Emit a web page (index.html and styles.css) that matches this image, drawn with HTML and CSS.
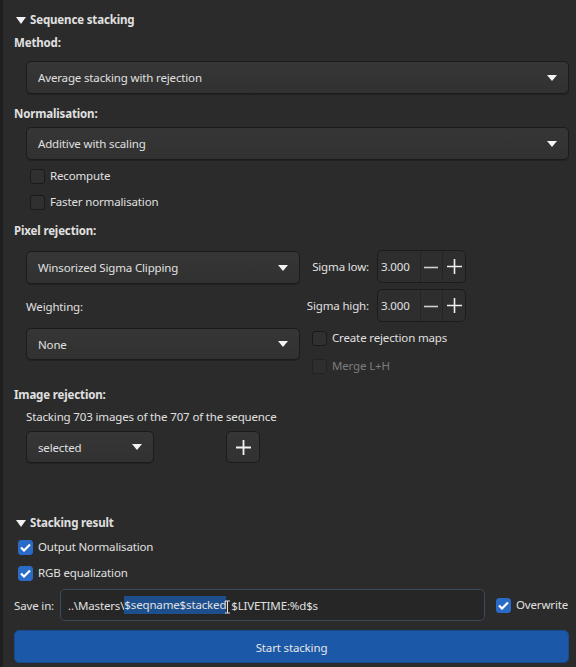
FILE: index.html
```html
<!DOCTYPE html>
<html lang="en">

<head>
    <meta charset="UTF-8">
    <title>Sequence stacking</title>
    <link rel="stylesheet" href="styles.css">
</head>

<body>
    <div class="page">
        <div class="section-head head-top"><span class="tri"></span>Sequence stacking</div>

        <div class="label bold lbl-method">Method:</div>
        <div class="combo combo-method"><span>Average stacking with rejection</span><span class="arrow"></span></div>

        <div class="label bold lbl-norm">Normalisation:</div>
        <div class="combo combo-norm"><span>Additive with scaling</span><span class="arrow"></span></div>

        <div class="check-row chk-recompute"><span class="box"></span>Recompute</div>
        <div class="check-row chk-faster"><span class="box"></span>Faster normalisation</div>

        <div class="label bold lbl-pixel">Pixel rejection:</div>

        <div class="reject-grid">
            <div class="reject-left">
                <div class="combo combo-algo"><span>Winsorized Sigma Clipping</span><span class="arrow"></span></div>
                <div class="label lbl-weight">Weighting:</div>
                <div class="combo combo-weight"><span>None</span><span class="arrow"></span></div>
            </div>
            <div class="reject-right">
                <div class="spin-row">
                    <span class="spin-label">Sigma low:</span>
                    <div class="spin">
                        <span class="spin-value">3.000</span>
                        <span class="spin-btn"><svg width="14" height="14" viewBox="0 0 14 14"><path d="M0 7.5h14" stroke="#cfcfcf" stroke-width="1.6"/></svg></span>
                        <span class="spin-btn"><svg width="15" height="15" viewBox="0 0 15 15"><path d="M0 7.5h15M7.5 0v15" stroke="#f0f0f0" stroke-width="1.6"/></svg></span>
                    </div>
                </div>
                <div class="spin-row spin-high">
                    <span class="spin-label">Sigma high:</span>
                    <div class="spin">
                        <span class="spin-value">3.000</span>
                        <span class="spin-btn"><svg width="14" height="14" viewBox="0 0 14 14"><path d="M0 7.5h14" stroke="#cfcfcf" stroke-width="1.6"/></svg></span>
                        <span class="spin-btn"><svg width="15" height="15" viewBox="0 0 15 15"><path d="M0 7.5h15M7.5 0v15" stroke="#f0f0f0" stroke-width="1.6"/></svg></span>
                    </div>
                </div>
                <div class="check-row chk-maps"><span class="box"></span>Create rejection maps</div>
                <div class="check-row chk-merge disabled"><span class="box"></span>Merge L+H</div>
            </div>
        </div>

        <div class="label bold lbl-image">Image rejection:</div>
        <div class="label lbl-count">Stacking 703 images of the 707 of the sequence</div>
        <div class="image-row">
            <div class="combo combo-select"><span>selected</span><span class="arrow"></span></div>
            <div class="plus-btn"><svg width="15" height="15" viewBox="0 0 15 15"><path d="M0 7.5h15M7.5 0v15" stroke="#f2f2f2" stroke-width="1.8"/></svg></div>
        </div>

        <div class="section-head head-result"><span class="tri"></span>Stacking result</div>
        <div class="check-row chk-output"><span class="box checked"><svg width="11" height="9" viewBox="0 0 11 9"><path d="M1 4.5l3 3 6-6" fill="none" stroke="#fff" stroke-width="2.2"/></svg></span>Output Normalisation</div>
        <div class="check-row chk-rgb"><span class="box checked"><svg width="11" height="9" viewBox="0 0 11 9"><path d="M1 4.5l3 3 6-6" fill="none" stroke="#fff" stroke-width="2.2"/></svg></span>RGB equalization</div>

        <div class="save-row">
            <span class="save-label">Save in:</span>
            <div class="entry">..\Masters\<span class="sel">$seqname$stacked</span><svg class="ibeam" width="7" height="14" viewBox="0 0 7 14"><path d="M1 1h5M3.5 1v12M1 13h5" stroke="#e6e6e6" stroke-width="1" fill="none"/></svg>$LIVETIME:%d$s</div>
            <div class="check-row chk-overwrite"><span class="box checked"><svg width="11" height="9" viewBox="0 0 11 9"><path d="M1 4.5l3 3 6-6" fill="none" stroke="#fff" stroke-width="2.2"/></svg></span>Overwrite</div>
        </div>

        <div class="start-btn">Start stacking</div>
    </div>
</body>

</html>
```

FILE: styles.css
```css
body {
    margin: 0;
    background: #2b2b2b;
    font-family: "Noto Sans", "Open Sans", sans-serif;
    font-size: 11.5px;
    letter-spacing: -0.15px;
    color: #e0e0e0;
}

.page {
    height: 667px;
    box-sizing: border-box;
    border-left: 3px solid #1f1f1f;
    padding: 0 7px 0 11px;
    overflow: hidden;
}

.label,
.section-head,
.check-row {
    height: 18px;
    line-height: 18px;
    white-space: nowrap;
}

.bold,
.section-head {
    font-weight: bold;
}

.section-head {
    display: flex;
    align-items: center;
}

.tri {
    width: 0;
    height: 0;
    border-left: 5px solid transparent;
    border-right: 5px solid transparent;
    border-top: 7px solid #f2f2f2;
    margin: 0 4px 0 2px;
}

.head-top { margin-top: 11px; }
.lbl-method { margin-top: 5px; }
.combo-method { margin-top: 9px; }
.lbl-norm { margin-top: 11px; }
.combo-norm { margin-top: 4px; }
.chk-recompute { margin-top: 7px; margin-left: 16px; }
.chk-faster { margin-top: 8px; margin-left: 16px; }
.lbl-pixel { margin-top: 11px; }

.combo {
    display: flex;
    align-items: center;
    justify-content: space-between;
    height: 33px;
    box-sizing: border-box;
    margin-left: 12px;
    padding: 0 11px 0 11px;
    background: linear-gradient(#363636, #313131);
    border: 1px solid #1b1b1b;
    border-radius: 5px;
    box-shadow: 0 1px 0 #222;
}

.arrow {
    width: 0;
    height: 0;
    border-left: 5.5px solid transparent;
    border-right: 5.5px solid transparent;
    border-top: 6px solid #f4f4f4;
}

/* pixel rejection block */
.reject-grid {
    display: flex;
    margin-top: 10px;
}

.reject-left {
    width: 286px;
}

.combo-algo { margin-top: 1px; }
.lbl-weight { margin-top: 14px; margin-left: 12px; }
.combo-weight { margin-top: 12px; height: 32px; }

.reject-right {
    flex: 1;
}

.spin-row {
    display: flex;
    align-items: center;
    height: 33px;
}

.spin-high { margin-top: 6px; }

.spin-label {
    width: 69px;
    text-align: right;
    margin-right: 8px;
}

.spin {
    display: flex;
    width: 89px;
    height: 33px;
    box-sizing: border-box;
    background: #2e2e2e;
    border: 1px solid #1c1c1c;
    border-radius: 5px;
}

.spin-value {
    width: 39px;
    padding-left: 3px;
    line-height: 31px;
    border-right: 1px solid #252525;
}

.spin-btn {
    width: 22px;
    display: flex;
    align-items: center;
    justify-content: center;
}

.spin-btn + .spin-btn {
    border-left: 1px solid #252525;
}

.chk-maps { margin-top: 7px; margin-left: 12px; }
.chk-merge { margin-top: 10px; margin-left: 12px; }

.check-row {
    display: flex;
    align-items: center;
}

.box {
    width: 15px;
    height: 15px;
    box-sizing: border-box;
    background: #303030;
    border: 1px solid #1a1a1a;
    border-radius: 3px;
    margin-right: 5px;
    display: flex;
    align-items: center;
    justify-content: center;
}

.box.checked {
    background: #2a6bc8;
    border-color: #2a6bc8;
}

.disabled {
    color: #7c7c7c;
}

.disabled .box {
    background: #2e2e2e;
    border-color: #222;
}

/* image rejection */
.lbl-image { margin-top: 11px; }
.lbl-count { margin-top: 4px; margin-left: 12px; }

.image-row {
    display: flex;
    margin-top: 5px;
}

.combo-select {
    width: 128px;
    height: 32px;
}

.plus-btn {
    width: 34px;
    height: 32px;
    box-sizing: border-box;
    margin-left: 72px;
    display: flex;
    align-items: center;
    justify-content: center;
    background: linear-gradient(#363636, #313131);
    border: 1px solid #1b1b1b;
    border-radius: 5px;
}

/* stacking result */
.head-result { margin-top: 51px; }
.chk-output { margin-top: 6px; margin-left: 4px; }
.chk-rgb { margin-top: 8px; margin-left: 4px; }

.save-row {
    display: flex;
    align-items: center;
    margin-top: 7px;
}

.save-label {
    width: 46px;
}

.entry {
    width: 425px;
    height: 32px;
    box-sizing: border-box;
    padding-left: 7px;
    display: flex;
    align-items: center;
    white-space: pre;
    background: #262626;
    border: 1px solid #3b4a5e;
    border-radius: 5px;
}

.sel {
    background: #1d4f8d;
    line-height: 18px;
}

.ibeam {
    margin: 4px 0 0 -2px;
}

.chk-overwrite {
    margin-left: 11px;
}

.start-btn {
    margin-top: 9px;
    height: 33px;
    line-height: 33px;
    text-align: center;
    background: #1b58a7;
    border: 1px solid #174b8e;
    border-radius: 5px;
    box-sizing: border-box;
    color: #e6e6e6;
}
```
